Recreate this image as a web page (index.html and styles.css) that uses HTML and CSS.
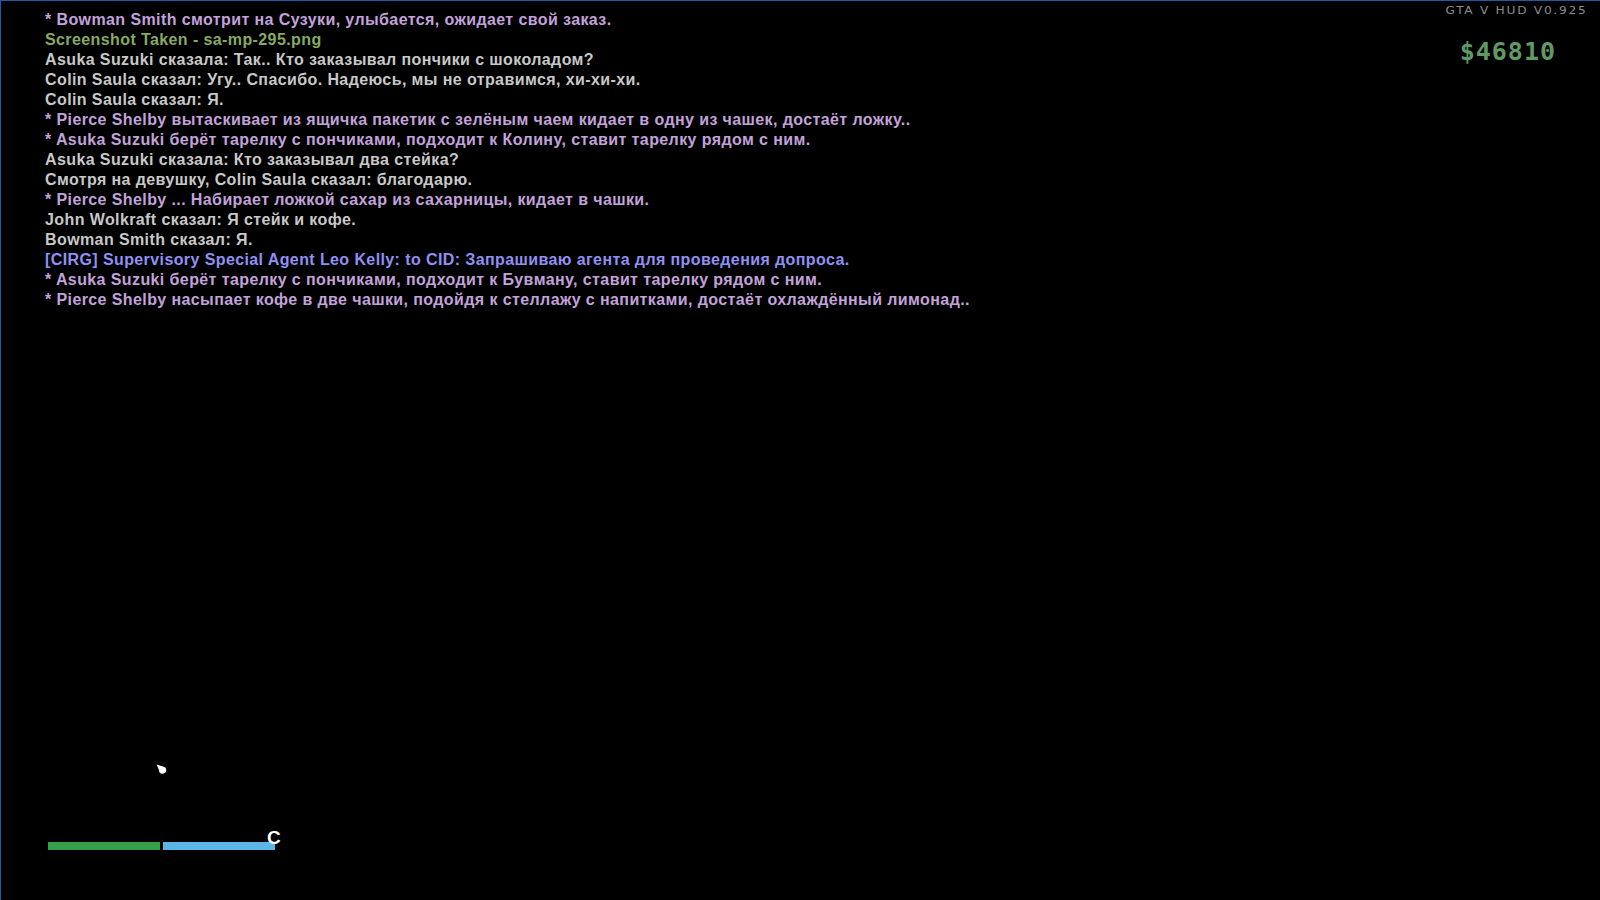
FILE: index.html
```html
<!DOCTYPE html>
<html lang="ru">
<head>
<meta charset="utf-8">
<title>SA-MP</title>
<link rel="stylesheet" href="styles.css">
</head>
<body>
<div class="screen">
  <div class="top">
    <div class="chat">
      <div class="line me">* Bowman Smith смотрит на Сузуки, улыбается, ожидает свой заказ.</div>
      <div class="line sys">Screenshot Taken - sa-mp-295.png</div>
      <div class="line say">Asuka Suzuki сказала: Так.. Кто заказывал пончики с шоколадом?</div>
      <div class="line say">Colin Saula сказал: Угу.. Спасибо. Надеюсь, мы не отравимся, хи-хи-хи.</div>
      <div class="line say">Colin Saula сказал: Я.</div>
      <div class="line me">* Pierce Shelby вытаскивает из ящичка пакетик с зелёным чаем кидает в одну из чашек, достаёт ложку..</div>
      <div class="line me">* Asuka Suzuki берёт тарелку с пончиками, подходит к Колину, ставит тарелку рядом с ним.</div>
      <div class="line say">Asuka Suzuki сказала: Кто заказывал два стейка?</div>
      <div class="line say">Смотря на девушку, Colin Saula сказал: благодарю.</div>
      <div class="line me">* Pierce Shelby ... Набирает ложкой сахар из сахарницы, кидает в чашки.</div>
      <div class="line say">John Wolkraft сказал: Я стейк и кофе.</div>
      <div class="line say">Bowman Smith сказал: Я.</div>
      <div class="line radio">[CIRG] Supervisory Special Agent Leo Kelly: to CID: Запрашиваю агента для проведения допроса.</div>
      <div class="line me">* Asuka Suzuki берёт тарелку с пончиками, подходит к Бувману, ставит тарелку рядом с ним.</div>
      <div class="line me">* Pierce Shelby насыпает кофе в две чашки, подойдя к стеллажу с напитками, достаёт охлаждённый лимонад..</div>
    </div>
    <div class="hud">
      <div class="version">GTA V HUD V0.925</div>
      <div class="money">$46810</div>
    </div>
  </div>
  <div class="bottom">
    <svg class="blip" width="12" height="10" viewBox="0 0 12 10">
      <path d="M0.5 0.5 L7 2.5 A3.6 3.6 0 1 1 3 6 Z" fill="#ffffff"/>
    </svg>
    <div class="bars">
      <div class="bar health"></div>
      <div class="bar armour"></div>
      <span class="mode">C</span>
    </div>
  </div>
</div>
</body>
</html>
```

FILE: styles.css
```css
html, body {
  margin: 0;
  padding: 0;
  background: #000;
}

.screen {
  width: 1600px;
  height: 900px;
  box-sizing: border-box;
  border-top: 1px solid #1d5ca3;
  border-left: 1px solid #1d5ca3;
  background: #000;
  display: flex;
  flex-direction: column;
  overflow: hidden;
}

.top {
  display: flex;
  justify-content: space-between;
  align-items: flex-start;
}

.chat {
  padding: 9px 0 0 44px;
  font-family: "Liberation Sans", Arial, sans-serif;
  font-weight: bold;
  font-size: 16px;
  letter-spacing: 0.4px;
  line-height: 20px;
  white-space: nowrap;
}

.line { height: 20px; }
.me { color: #c2a2da; }
.sys { color: #88aa62; }
.say { color: #c8c8c8; }
.radio { color: #9090f2; }

.hud {
  display: flex;
  flex-direction: column;
  align-items: flex-end;
  padding: 5px 13px 0 0;
}

.version {
  font-family: "DejaVu Sans", sans-serif;
  font-size: 10px;
  line-height: 10px;
  letter-spacing: 1.4px;
  color: #8c8c8c;
  transform: scaleX(1.22);
  transform-origin: right center;
}

.money {
  margin: 25px 31px 0 0;
  font-family: "DejaVu Sans Mono", monospace;
  font-weight: bold;
  font-size: 25px;
  line-height: 22px;
  color: #5f9a66;
  letter-spacing: 1px;
}

.bottom {
  margin-top: auto;
  padding: 0 0 50px 0;
  display: flex;
  flex-direction: column;
}

.blip {
  display: block;
  margin: 0 0 68px 155px;
}

.bars {
  position: relative;
  display: flex;
  gap: 3px;
  margin-left: 47px;
}

.bar {
  width: 112px;
  height: 8px;
}

.health { background: #36a04a; }
.armour { background: #5bb6e6; }

.mode {
  position: absolute;
  left: 219px;
  top: -14px;
  font-family: "Liberation Sans", Arial, sans-serif;
  font-weight: bold;
  font-size: 19px;
  line-height: 19px;
  color: #fff;
}
```
